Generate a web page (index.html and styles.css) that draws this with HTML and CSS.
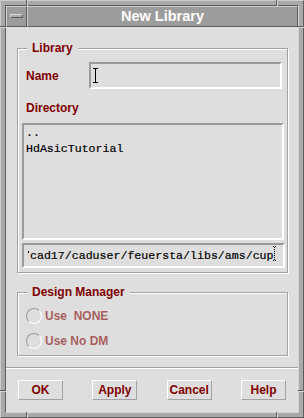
FILE: index.html
```html
<!DOCTYPE html>
<html>
<head>
<meta charset="utf-8">
<link rel="stylesheet" href="styles.css">
</head>
<body>
<div class="window">
  <div class="notch-v n-top-l"></div>
  <div class="notch-v n-top-r"></div>
  <div class="notch-v n-bot-l"></div>
  <div class="notch-v n-bot-r"></div>
  <div class="notch-h n-left-t"></div>
  <div class="notch-h n-left-b"></div>
  <div class="notch-h n-right-t"></div>
  <div class="notch-h n-right-b"></div>
  <div class="inner">
    <div class="titlebar">
      <div class="menubtn"><span class="menubar"></span></div>
      <div class="title">New Library</div>
    </div>
    <div class="content">
      <fieldset class="group lib">
        <legend>Library</legend>
        <div class="name-row">
          <span class="lbl name-lbl">Name</span>
          <div class="input">
            <svg class="ibeam" width="5" height="15" viewBox="0 0 5 15"><path d="M0 .5h5M2.5 1v13M0 14.5h5" stroke="#000" stroke-width="1" fill="none"/></svg>
          </div>
        </div>
        <div class="lbl dir-lbl">Directory</div>
        <div class="list">
          <div class="item">..</div>
          <div class="item">HdAsicTutorial</div>
        </div>
        <div class="path">
          <span class="tick"></span>
          <span class="path-text">cad17/caduser/feuersta/libs/ams/cup</span>
          <svg class="dcursor" width="5" height="15" viewBox="0 0 5 15"><path d="M1 .5h1M3 .5h1M2.5 1v13M1 14.5h1M3 14.5h1" stroke="#000" stroke-width="1" stroke-dasharray="1 1" fill="none"/></svg>
        </div>
      </fieldset>
      <fieldset class="group dm">
        <legend>Design Manager</legend>
        <div class="radio-row"><span class="radio"></span><span class="disabled">Use  NONE</span></div>
        <div class="radio-row"><span class="radio"></span><span class="disabled">Use No DM</span></div>
      </fieldset>
      <div class="sep"></div>
      <div class="buttons">
        <button class="btn">OK</button>
        <button class="btn">Apply</button>
        <button class="btn">Cancel</button>
        <button class="btn">Help</button>
      </div>
    </div>
  </div>
</div>
</body>
</html>
```

FILE: styles.css
```css
html, body {
  margin: 0;
  padding: 0;
  background: #a9a9a9;
}

.window {
  position: relative;
  box-sizing: border-box;
  width: 304px;
  height: 418px;
  background: #a9a9a9;
  border: 1px solid;
  border-color: #cdcdcd #5c5c5c #5c5c5c #cdcdcd;
  padding: 4px;
}

.notch-v {
  position: absolute;
  width: 1px;
  height: 6px;
  background: #5c5c5c;
  box-shadow: 1px 0 0 #d4d4d4;
}
.notch-h {
  position: absolute;
  width: 6px;
  height: 1px;
  background: #5c5c5c;
  box-shadow: 0 1px 0 #d4d4d4;
}
.n-top-l { left: 25px; top: -1px; }
.n-top-r { left: 275px; top: -1px; }
.n-bot-l { left: 25px; top: 411px; }
.n-bot-r { left: 275px; top: 411px; }
.n-left-t { left: -1px; top: 25px; }
.n-left-b { left: -1px; top: 389px; }
.n-right-t { left: 297px; top: 25px; }
.n-right-b { left: 297px; top: 389px; }

.inner {
  box-sizing: border-box;
  height: 100%;
  border: 1px solid;
  border-color: #5c5c5c #d4d4d4 #d4d4d4 #5c5c5c;
  display: flex;
  flex-direction: column;
}

.titlebar {
  display: flex;
  height: 21px;
  flex: none;
}

.menubtn {
  box-sizing: border-box;
  width: 21px;
  height: 21px;
  background: #9c9c9c;
  border: 1px solid;
  border-color: #cfcfcf #5c5c5c #5c5c5c #cfcfcf;
  display: flex;
  align-items: center;
  justify-content: center;
}

.menubar {
  box-sizing: border-box;
  width: 13px;
  height: 4px;
  margin-top: -1px;
  background: #a9a9a9;
  border: 1px solid;
  border-color: #dadada #5c5c5c #5c5c5c #dadada;
}

.title {
  flex: 1;
  box-sizing: border-box;
  height: 21px;
  background: #9c9c9c;
  border: 1px solid;
  border-color: #cfcfcf #5c5c5c #5c5c5c #cfcfcf;
  color: #ffffff;
  font: bold 14.5px/19px "Liberation Sans", Arial, sans-serif;
  text-align: center;
}

.content {
  flex: 1;
  background: #dedede;
  display: flex;
  flex-direction: column;
}

.group {
  margin: 0 10px 0 11px;
  padding: 0 2px 4px 4px;
  border: 1px solid #a2a2a2;
  box-shadow: inset 1px 1px 0 #ffffff, 1px 1px 0 #ffffff;
  min-width: 0;
}

.group legend {
  margin-left: 5px;
  padding: 0 5px;
  font: bold 12px/15px "Liberation Sans", Arial, sans-serif;
  color: #800000;
  background: #dedede;
}

.lib {
  margin-top: 14px;
}

.lbl {
  font: bold 12px/14px "Liberation Sans", Arial, sans-serif;
  color: #800000;
}

.name-row {
  display: flex;
  align-items: center;
  margin-top: 6px;
}

.name-lbl {
  width: 63px;
  margin-left: 4px;
}

.input {
  box-sizing: border-box;
  width: 193px;
  height: 27px;
  border: 2px solid;
  border-color: #9a9a9a #ffffff #ffffff #9a9a9a;
  display: flex;
  align-items: center;
  padding-left: 2px;
}

.ibeam {
  display: block;
}

.dir-lbl {
  margin-top: 12px;
  margin-left: 4px;
}

.list {
  box-sizing: border-box;
  height: 117px;
  margin-top: 8px;
  margin-right: 1px;
  border: 2px solid;
  border-color: #9a9a9a #ffffff #ffffff #9a9a9a;
  padding: 0 2px;
  font: 11.6px/16px "Liberation Mono", "Courier New", monospace;
  color: #000000;
  -webkit-text-stroke: 0.2px #000;
}

.path {
  position: relative;
  box-sizing: border-box;
  height: 25px;
  margin-top: 3px;
  border: 2px solid;
  border-color: #9a9a9a #ffffff #ffffff #9a9a9a;
  padding: 3px 4px 0 4px;
  display: flex;
  align-items: flex-start;
  white-space: nowrap;
  font: 11.6px/16px "Liberation Mono", "Courier New", monospace;
  color: #000000;
  -webkit-text-stroke: 0.2px #000;
}

.tick {
  width: 1px;
  height: 2px;
  margin-top: 3px;
  margin-right: 1px;
  background: #000000;
  flex: none;
}

.dcursor {
  position: absolute;
  left: 248px;
  top: 1px;
}

.dm {
  margin-top: 12px;
  padding-top: 3px;
  padding-bottom: 2px;
}

.radio-row {
  display: flex;
  align-items: center;
  height: 25px;
  margin-left: 4px;
}

.radio {
  box-sizing: border-box;
  width: 16px;
  height: 16px;
  border-radius: 50%;
  border: 1px solid;
  border-color: #9a9a9a #ffffff #ffffff #9a9a9a;
  margin-right: 3px;
}

.disabled {
  font: bold 12px/14px "Liberation Sans", Arial, sans-serif;
  white-space: pre;
  color: rgba(128, 0, 0, 0.6);
}

.sep {
  margin-top: 11px;
  height: 1px;
  background: #a2a2a2;
  border-bottom: 1px solid #ffffff;
}

.buttons {
  display: flex;
  justify-content: space-between;
  padding: 0 12px;
  margin-top: 11px;
}

.btn {
  box-sizing: border-box;
  width: 45px;
  height: 20px;
  border: 1px solid;
  border-color: #ffffff #a2a2a2 #a2a2a2 #ffffff;
  background: #dedede;
  font: bold 12px/16px "Liberation Sans", Arial, sans-serif;
  color: #800000;
  padding: 0;
  margin: 0;
}
```
